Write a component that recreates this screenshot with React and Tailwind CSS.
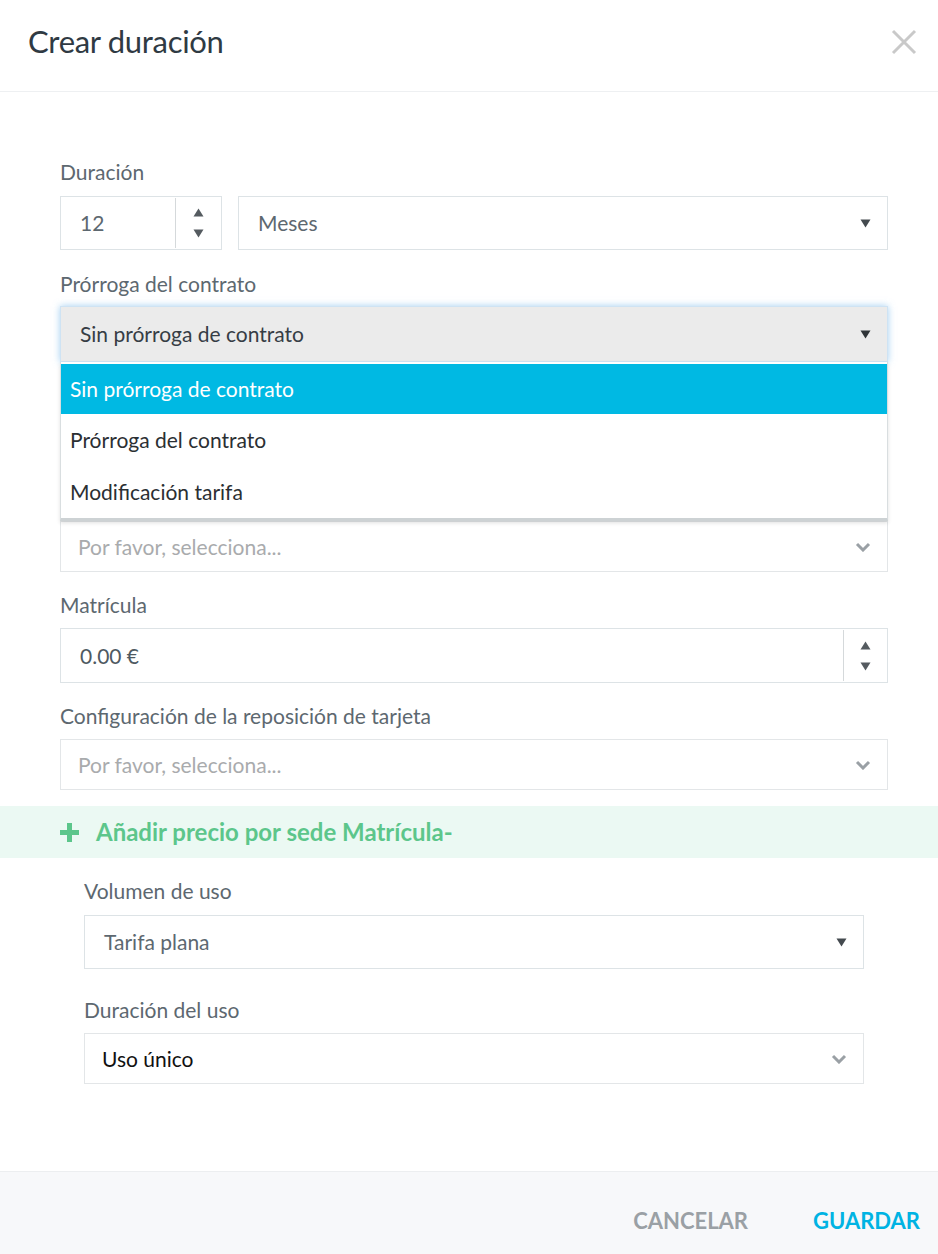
import React from "react";

const Tri = ({ className = "" }) => (
  <svg width="11" height="9" viewBox="0 0 11 9" className={className}>
    <path d="M0.5 0.5 H10.5 L5.5 8.5 Z" fill="currentColor" />
  </svg>
);

const Spinner = () => (
  <div className="flex flex-col items-center gap-[12px] text-[#555b60]">
    <svg width="11" height="9" viewBox="0 0 11 9"><path d="M5.5 0.5 L10.5 8.5 H0.5 Z" fill="currentColor" /></svg>
    <svg width="11" height="9" viewBox="0 0 11 9"><path d="M0.5 0.5 H10.5 L5.5 8.5 Z" fill="currentColor" /></svg>
  </div>
);

const Chevron = () => (
  <svg width="16" height="10" viewBox="0 0 16 10" className="text-[#9aa0a5]">
    <path d="M2 2 L8 8 L14 2" fill="none" stroke="currentColor" strokeWidth="3" />
  </svg>
);

const Label = ({ children, className = "" }) => (
  <div className={"h-[24px] leading-[24px] text-[21px] text-[#5d6870] whitespace-nowrap " + className}>{children}</div>
);

export default function App() {
  return (
    <div className="w-[938px] h-[1254px] bg-white flex flex-col" style={{ fontFamily: "Lato, 'Open Sans', sans-serif" }}>
      <div className="h-[92px] shrink-0 border-b border-[#eef0f2] flex items-center justify-between pl-[28px] pr-[21px] pb-[8px]">
        <div className="text-[31px] text-[#2f3a43] tracking-[-0.3px]">Crear duración</div>
        <svg width="26" height="26" viewBox="0 0 26 26" className="text-[#c9c9c9]">
          <path d="M2 2 L24 24 M24 2 L2 24" stroke="currentColor" strokeWidth="3" />
        </svg>
      </div>

      <div className="flex-1 flex flex-col pt-[68px]">
        <div className="pl-[60px] pr-[50px] flex flex-col">
          <Label>Duración</Label>
          <div className="mt-[12px] flex gap-[16px] h-[54px]">
            <div className="w-[162px] border border-[#dde3e6] flex">
              <div className="flex-1 flex items-center pl-[19px] text-[21px] text-[#5d6870]">12</div>
              <div className="w-[46px] border-l border-[#d5d9db] flex items-center justify-center my-[1px]">
                <Spinner />
              </div>
            </div>
            <div className="flex-1 border border-[#dde3e6] flex items-center justify-between pl-[19px] pr-[16px] text-[21px] text-[#5d6870]">
              <span>Meses</span>
              <Tri className="text-[#444a4f]" />
            </div>
          </div>

          <Label className="mt-[22px]">Prórroga del contrato</Label>
          <div className="relative mt-[10px]">
            <div className="h-[56px] bg-[#ebebeb] border border-[#cfe3f3] shadow-[0_0_7px_rgba(102,175,233,0.6)] flex items-center justify-between pl-[19px] pr-[16px] text-[21px] text-[#363d45]">
              <span>Sin prórroga de contrato</span>
              <Tri className="text-[#2f3438]" />
            </div>
            <div className="absolute left-0 right-0 top-[56px] z-10 bg-white border-l border-r border-[#d9dee0] border-b-[3px] border-b-[#cdd2d4] shadow-[0_2px_4px_rgba(0,0,0,0.12)] pt-[2px] text-[21px]">
              <div className="h-[50px] bg-[#00b9e3] text-white flex items-center pl-[9px]">Sin prórroga de contrato</div>
              <div className="h-[52px] text-[#2b2f33] flex items-center pl-[9px]">Prórroga del contrato</div>
              <div className="h-[52px] text-[#2b2f33] flex items-center pl-[9px]">Modificación tarifa</div>
            </div>
          </div>

          <div className="mt-[56px] h-[54px] border border-[#dde3e6]"></div>
          <div className="mt-[49px] h-[51px] border border-[#e3e6e8] flex items-center justify-between pl-[17px] pr-[16px] text-[21px] text-[#a9abad]">
            <span>Por favor, selecciona...</span>
            <Chevron />
          </div>

          <Label className="mt-[21px]">Matrícula</Label>
          <div className="mt-[11px] h-[55px] border border-[#dde3e6] flex">
            <div className="flex-1 flex items-center pl-[19px] text-[21px] text-[#4f5a62]">0.00 €</div>
            <div className="w-[44px] border-l border-[#d5d9db] flex items-center justify-center my-[1px]">
              <Spinner />
            </div>
          </div>

          <Label className="mt-[21px]">Configuración de la reposición de tarjeta</Label>
          <div className="mt-[11px] h-[51px] border border-[#e3e6e8] flex items-center justify-between pl-[17px] pr-[16px] text-[21px] text-[#a9abad]">
            <span>Por favor, selecciona...</span>
            <Chevron />
          </div>
        </div>

        <div className="mt-[16px] h-[52px] bg-[#ebf9f3] flex items-center pl-[60px] text-[#5cc68b] font-bold text-[24px]">
          <svg width="19" height="19" viewBox="0 0 19 19" className="mr-[17px]">
            <path d="M9.5 0 V19 M0 9.5 H19" stroke="currentColor" strokeWidth="5" />
          </svg>
          <span>Añadir precio por sede Matrícula-</span>
        </div>

        <div className="pl-[84px] pr-[74px] flex flex-col">
          <Label className="mt-[21px]">Volumen de uso</Label>
          <div className="mt-[12px] h-[54px] border border-[#dde3e6] flex items-center justify-between pl-[19px] pr-[16px] text-[21px] text-[#5d6870]">
            <span>Tarifa plana</span>
            <Tri className="text-[#444a4f]" />
          </div>

          <Label className="mt-[29px]">Duración del uso</Label>
          <div className="mt-[11px] h-[51px] border border-[#e3e6e8] flex items-center justify-between pl-[17px] pr-[16px] text-[21px] text-[#111]">
            <span>Uso único</span>
            <Chevron />
          </div>
        </div>
      </div>

      <div className="h-[83px] shrink-0 bg-[#f7f8fa] border-t border-[#eceef0] flex items-center justify-end pr-[18px] pt-[14px] gap-[65px] font-bold text-[22px]">
        <span className="text-[#9aa0a5]">CANCELAR</span>
        <span className="text-[#00b3e3]">GUARDAR</span>
      </div>
    </div>
  );
}
